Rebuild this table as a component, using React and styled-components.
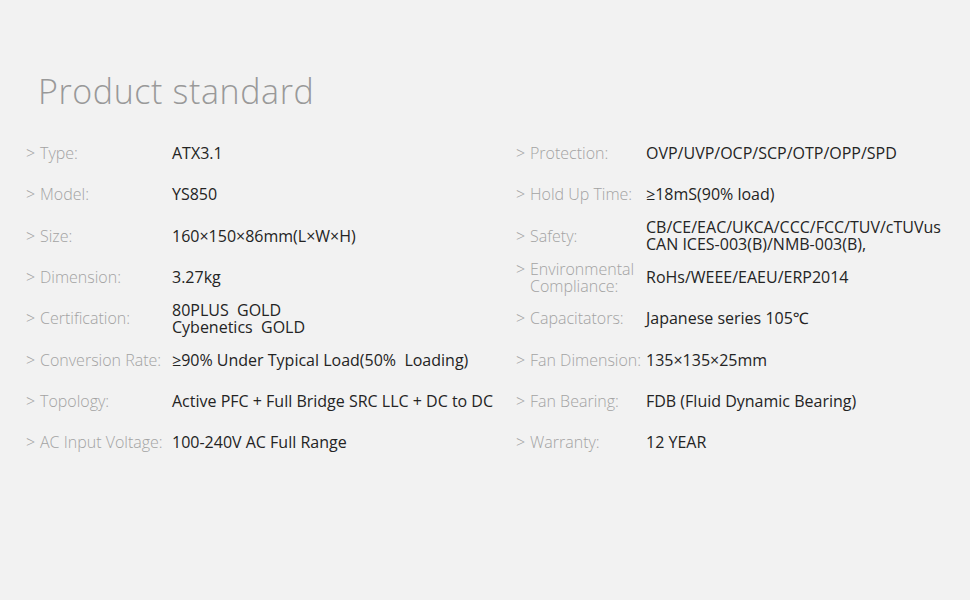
import React from 'react'
import styled, { createGlobalStyle } from 'styled-components'

const Global = createGlobalStyle`
  html, body {
    margin: 0;
    padding: 0;
    background: #f2f2f2;
  }
`;

const Page = styled.div`
  width: 970px;
  height: 600px;
  box-sizing: border-box;
  padding: 70px 0 0 26px;
  background: #f2f2f2;
  font-family: "Open Sans", "Noto Sans", sans-serif;
`;

const Title = styled.h1`
  margin: 0 0 21px 12px;
  font-family: "Open Sans", sans-serif;
  font-weight: 300;
  font-size: 34px;
  line-height: 42px;
  letter-spacing: 0.6px;
  color: #999;
`;

const Columns = styled.div`
  display: grid;
  grid-template-columns: 490px 450px;
`;

const Specs = styled.div`
  display: grid;
  grid-template-columns: ${props => props.$labelWidth}px 1fr;
  grid-auto-rows: 41.3px;
  align-items: center;
`;

const Label = styled.div`
  display: flex;
  font-weight: 300;
  font-size: 16px;
  line-height: 17px;
  color: #a3a3a3;
  white-space: nowrap;
`;

const Arrow = styled.span`
  width: 14px;
  flex: none;
`;

const LabelText = styled.span`
  white-space: pre;
`;

const Value = styled.div`
  font-size: 16px;
  line-height: 17px;
  color: #242424;
  white-space: pre;
`;

const left = [
  ['Type:', 'ATX3.1'],
  ['Model:', 'YS850'],
  ['Size:', '160×150×86mm(L×W×H)'],
  ['Dimension:', '3.27kg'],
  ['Certification:', '80PLUS  GOLD\nCybenetics  GOLD'],
  ['Conversion Rate:', '≥90% Under Typical Load(50%  Loading)'],
  ['Topology:', 'Active PFC + Full Bridge SRC LLC + DC to DC'],
  ['AC Input Voltage:', '100-240V AC Full Range'],
];

const right = [
  ['Protection:', 'OVP/UVP/OCP/SCP/OTP/OPP/SPD'],
  ['Hold Up Time:', '≥18mS(90% load)'],
  ['Safety:', 'CB/CE/EAC/UKCA/CCC/FCC/TUV/cTUVus\nCAN ICES-003(B)/NMB-003(B),'],
  ['Environmental\nCompliance:', 'RoHs/WEEE/EAEU/ERP2014'],
  ['Capacitators:', 'Japanese series 105℃'],
  ['Fan Dimension:', '135×135×25mm'],
  ['Fan Bearing:', 'FDB (Fluid Dynamic Bearing)'],
  ['Warranty:', '12 YEAR'],
];

function SpecList({ items, labelWidth }) {
  return (
    <Specs $labelWidth={labelWidth}>
      {items.map(([label, value]) => (
        <React.Fragment key={label}>
          <Label>
            <Arrow>&gt;</Arrow>
            <LabelText>{label}</LabelText>
          </Label>
          <Value>{value}</Value>
        </React.Fragment>
      ))}
    </Specs>
  );
}

export default function App() {
  return (
    <Page>
      <Global />
      <Title>Product standard</Title>
      <Columns>
        <SpecList items={left} labelWidth={146} />
        <SpecList items={right} labelWidth={130} />
      </Columns>
    </Page>
  );
}
